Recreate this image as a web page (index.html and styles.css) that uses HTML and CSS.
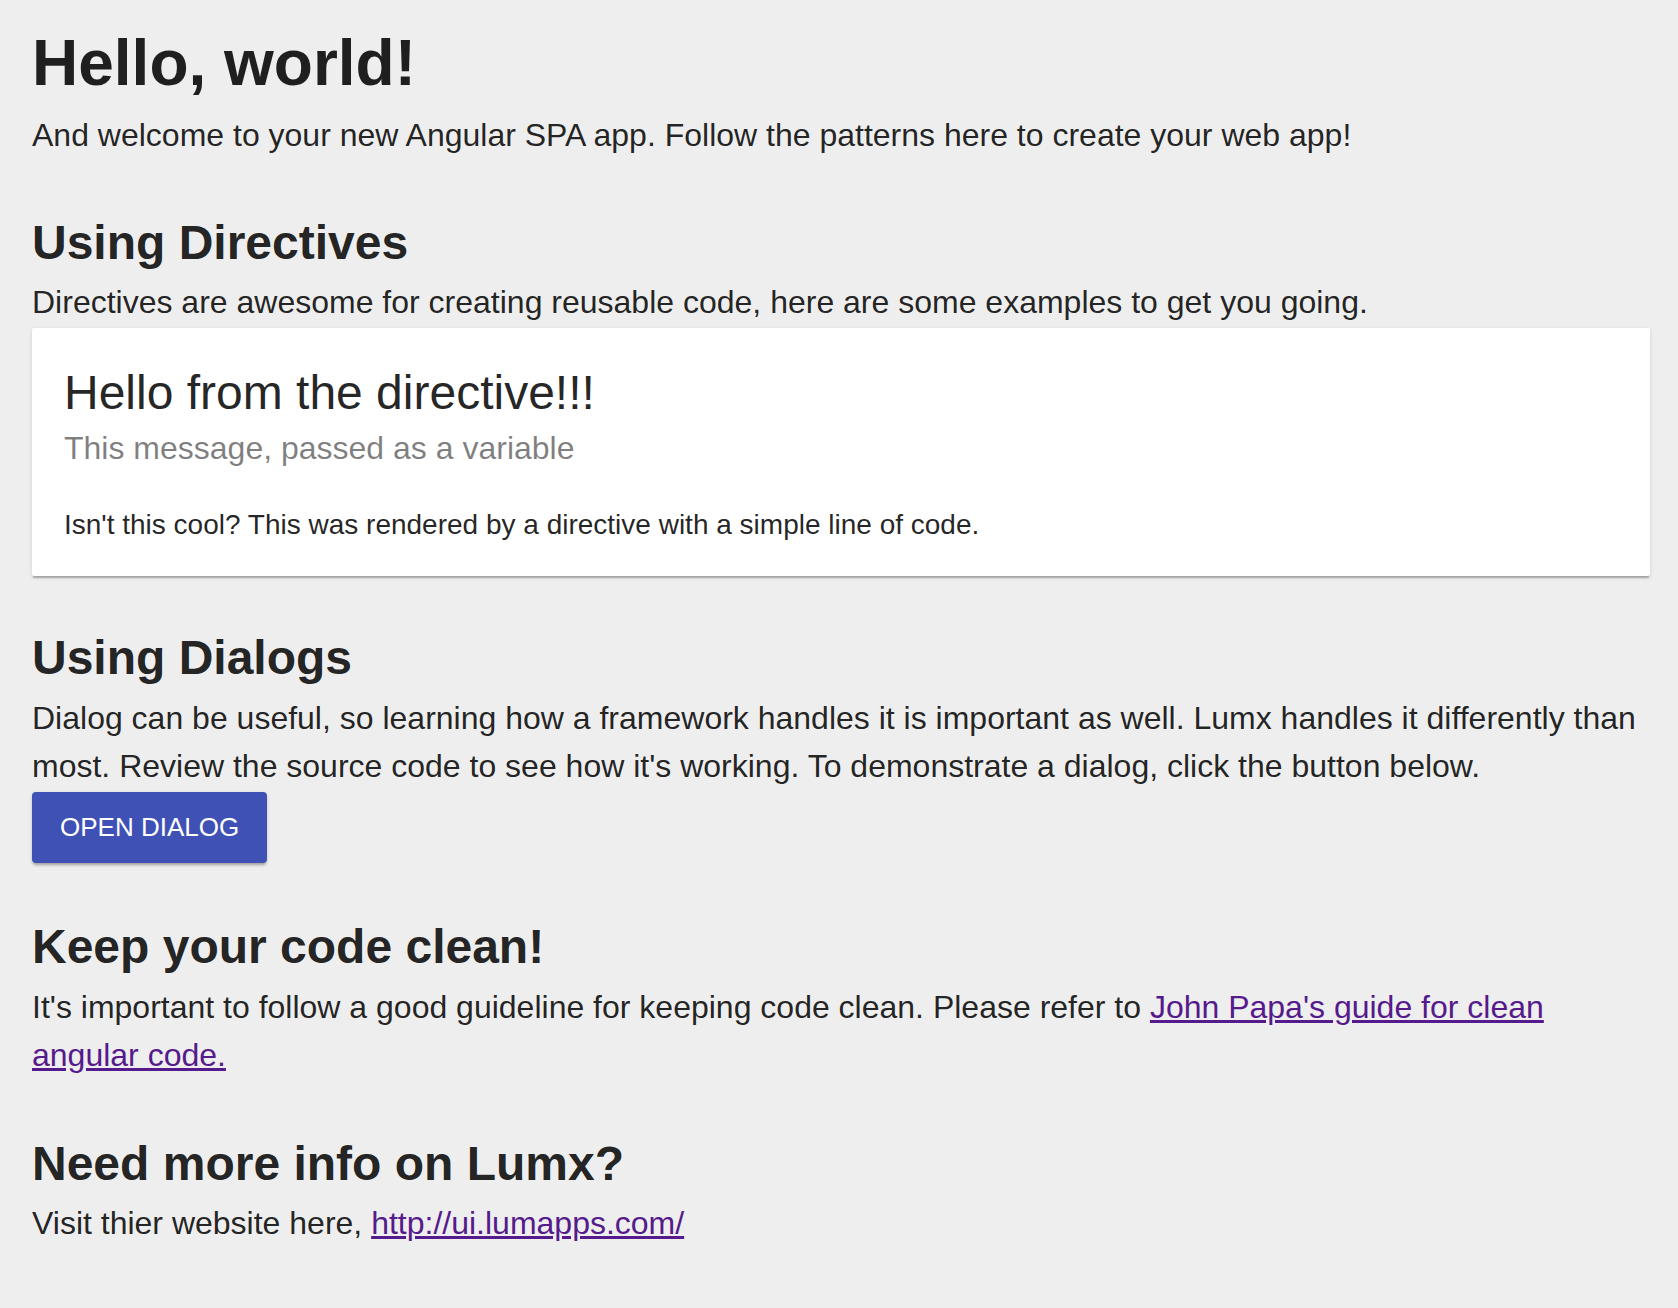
FILE: index.html
```html
<!DOCTYPE html>
<html lang="en">
<head>
<meta charset="utf-8">
<title>Hello, world!</title>
<link rel="stylesheet" href="styles.css">
</head>
<body>
<main class="page">
  <h1 class="title">Hello, world!</h1>
  <p class="text">And welcome to your new Angular SPA app. Follow the patterns here to create your web app!</p>

  <h2 class="heading">Using Directives</h2>
  <p class="text">Directives are awesome for creating reusable code, here are some examples to get you going.</p>
  <div class="card">
    <div class="card-title">Hello from the directive!!!</div>
    <div class="card-subtitle">This message, passed as a variable</div>
    <p class="card-body">Isn't this cool? This was rendered by a directive with a simple line of code.</p>
  </div>

  <h2 class="heading heading-after-card">Using Dialogs</h2>
  <p class="text">Dialog can be useful, so learning how a framework handles it is important as well. Lumx handles it differently than most. Review the source code to see how it's working. To demonstrate a dialog, click the button below.</p>
  <button class="btn" type="button">Open Dialog</button>

  <h2 class="heading">Keep your code clean!</h2>
  <p class="text">It's important to follow a good guideline for keeping code clean. Please refer to <a class="link" href="#">John Papa's guide for clean angular code.</a></p>

  <h2 class="heading heading-last">Need more info on Lumx?</h2>
  <p class="text">Visit thier website here, <a class="link" href="#">http://ui.lumapps.com/</a></p>
</main>
</body>
</html>
```

FILE: styles.css
```css
html, body {
  margin: 0;
  padding: 0;
}

body {
  background: #eeeeee;
  color: rgba(0, 0, 0, 0.87);
  font-family: "Liberation Sans", Arial, sans-serif;
}

.page {
  padding: 25px 28px 40px 32px;
}

.title {
  font-size: 64px;
  font-weight: 700;
  line-height: 1.2;
  margin: 0 0 9px;
}

.text {
  font-size: 32px;
  line-height: 48px;
  margin: 0;
}

.heading {
  font-size: 48px;
  font-weight: 700;
  line-height: 1.2;
  margin: 55px 0 7px;
}

.heading-after-card {
  margin-top: 53px;
}

.heading-last {
  margin-top: 56px;
}

.card {
  background: #ffffff;
  border-radius: 2px;
  margin-top: 2px;
  padding: 34px 32px 30px;
  box-shadow: 0 3px 2px -1px rgba(0, 0, 0, 0.28), 0 1px 4px rgba(0, 0, 0, 0.1);
}

.card-title {
  font-size: 48px;
  line-height: 62px;
}

.card-subtitle {
  font-size: 32px;
  line-height: 48px;
  color: rgba(0, 0, 0, 0.5);
}

.card-body {
  font-size: 28px;
  line-height: 42px;
  margin: 32px 0 0;
}

.btn {
  display: block;
  margin: 2px 0 0;
  height: 71px;
  padding: 0 28px;
  border: 0;
  border-radius: 4px;
  background: #3f51b5;
  color: #ffffff;
  font-family: "Liberation Sans", Arial, sans-serif;
  font-size: 26px;
  text-transform: uppercase;
  box-shadow: 0 3px 3px -1px rgba(0, 0, 0, 0.28), 0 1px 4px rgba(0, 0, 0, 0.1);
  cursor: pointer;
}

.link {
  color: #551a8b;
  text-decoration: underline;
}
```
